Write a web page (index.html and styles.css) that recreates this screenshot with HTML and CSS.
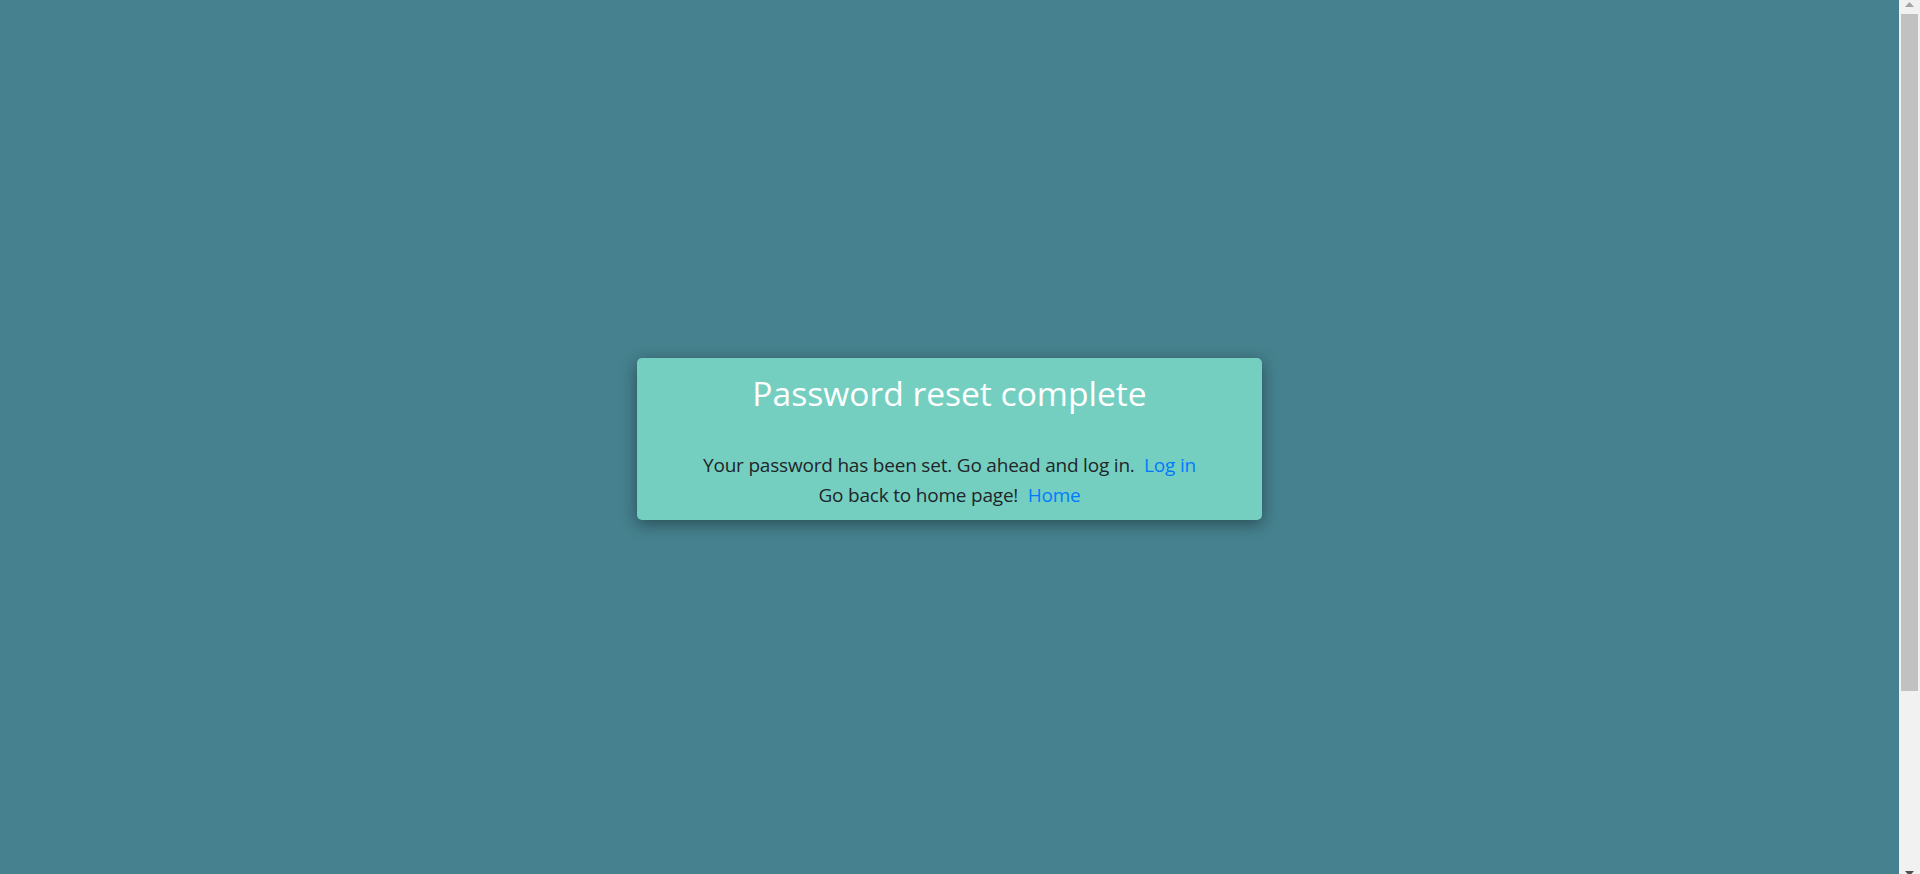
FILE: index.html
```html
<!DOCTYPE html>
<html lang="en">
<head>
<meta charset="utf-8">
<title>Password reset complete</title>
<link rel="stylesheet" href="styles.css">
</head>
<body>
<div class="window">
  <main class="page">
    <section class="card">
      <h2 class="card-title">Password reset complete</h2>
      <p class="card-text">Your password has been set. Go ahead and log in.&nbsp; <a class="link" href="#">Log in</a></p>
      <p class="card-text">Go back to home page!&nbsp; <a class="link" href="#">Home</a></p>
    </section>
  </main>
  <div class="scrollbar" aria-hidden="true">
    <div class="sb-button sb-up">
      <svg width="9" height="5" viewBox="0 0 9 5"><polygon points="4.5,0 9,5 0,5" fill="#a3a3a3"/></svg>
    </div>
    <div class="sb-thumb"></div>
    <div class="sb-track"></div>
    <div class="sb-button sb-down">
      <svg width="9" height="5" viewBox="0 0 9 5"><polygon points="0,0 9,0 4.5,5" fill="#505050"/></svg>
    </div>
  </div>
</div>
</body>
</html>
```

FILE: styles.css
```css
html, body {
  margin: 0;
  padding: 0;
  background: #45818e;
}

body {
  font-family: "Open Sans", "Noto Sans", sans-serif;
  color: #212529;
}

.window {
  display: flex;
  height: 874px;
  overflow: hidden;
}

.page {
  flex: 1;
  box-sizing: border-box;
  padding-top: 4px;
  display: flex;
  align-items: center;
  justify-content: center;
}

.card {
  box-sizing: border-box;
  width: 625px;
  padding: 15px 16px 10px;
  background: #75cfc0;
  border-radius: 5px;
  box-shadow: 0 4px 16px rgba(0, 0, 0, 0.4);
  text-align: center;
}

.card-title {
  margin: 0 0 37px;
  font-size: 33.6px;
  font-weight: 400;
  line-height: 1.2;
  color: #ffffff;
}

.card-text {
  margin: 0;
  font-size: 19px;
  line-height: 30px;
  letter-spacing: -0.2px;
}

.link {
  color: #007bff;
  text-decoration: none;
}

/* classic browser scrollbar, as in the screenshot */
.scrollbar {
  width: 21px;
  flex: none;
  display: flex;
  flex-direction: column;
  background: #f1f1f1;
}

.sb-button {
  display: flex;
  justify-content: center;
  flex: none;
}

.sb-button svg {
  display: block;
}

.sb-up {
  height: 14px;
  padding-top: 2px;
  box-sizing: border-box;
}

.sb-down {
  height: 3px;
  align-items: flex-start;
  overflow: hidden;
}

.sb-thumb {
  flex: none;
  height: 677px;
  margin: 0 2px;
  background: #c1c1c1;
}

.sb-track {
  flex: 1;
}
```
